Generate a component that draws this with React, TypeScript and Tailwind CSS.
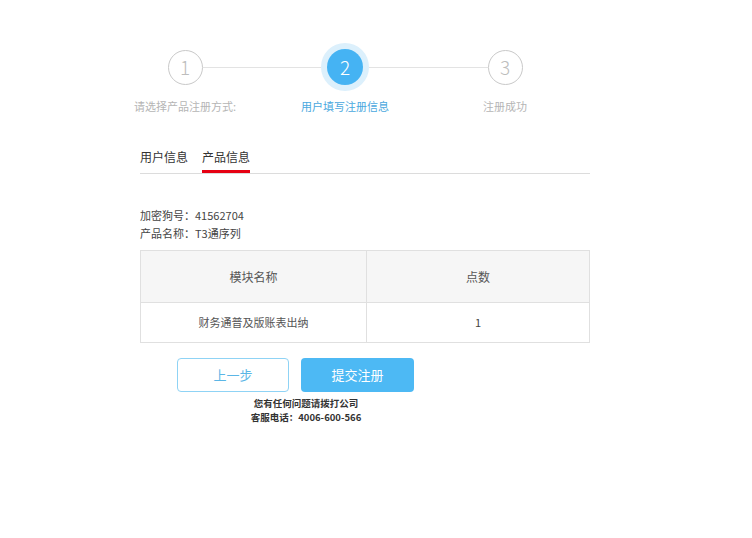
const font = { fontFamily: '"Microsoft YaHei", "Noto Sans CJK SC", "Open Sans", sans-serif' }

const steps = [
  { n: 1, label: '请选择产品注册方式:' },
  { n: 2, label: '用户填写注册信息' },
  { n: 3, label: '注册成功' },
]

function Step({ n, label, active, first, last }: { n: number; label: string; active: boolean; first: boolean; last: boolean }) {
  return (
    <div className="w-[160px] flex flex-col items-center">
      <div className="w-full h-[48px] flex items-center">
        <div className={first ? 'flex-1 h-px' : 'flex-1 h-px bg-[#e3e3e3]'} />
        {active ? (
          <div className="w-[48px] h-[48px] rounded-full bg-[#dcf0fc] flex items-center justify-center">
            <div className="w-[36px] h-[36px] rounded-full bg-[#45b3f3] text-white text-[19px] font-light flex items-center justify-center">
              {n}
            </div>
          </div>
        ) : (
          <div className="w-[35px] h-[35px] rounded-full border-[1.5px] border-[#c9c9c9] text-[#bdbdbd] text-[19px] font-light flex items-center justify-center">
            {n}
          </div>
        )}
        <div className={last ? 'flex-1 h-px' : 'flex-1 h-px bg-[#e3e3e3]'} />
      </div>
      <div className={`mt-[7px] text-[11px] leading-[16px] ${active ? 'text-[#4aa8de]' : 'text-[#b5b5b5]'}`}>{label}</div>
    </div>
  )
}

export default function App() {
  return (
    <div className="w-[752px] h-[538px] bg-white" style={font}>
      <div className="pt-[43px] pl-[105px] flex">
        {steps.map((s, i) => (
          <Step key={s.n} n={s.n} label={s.label} active={i === 1} first={i === 0} last={i === steps.length - 1} />
        ))}
      </div>

      <div className="ml-[140px] w-[450px]">
        <div className="mt-[35px] flex gap-[14px] border-b border-[#dcdcdc]">
          <div className="text-[12px] leading-[16px] text-[#333] pb-[8px]">用户信息</div>
          <div className="text-[12px] leading-[16px] text-[#333] pb-[5px] border-b-[3px] border-[#e60012]">产品信息</div>
        </div>

        <div className="mt-[32px] text-[11px] leading-[18px] text-[#444]">
          <div>加密狗号：41562704</div>
          <div>产品名称：T3通序列</div>
        </div>

        <table className="mt-[8px] w-full border-collapse text-[#555]">
          <thead>
            <tr className="bg-[#f6f6f6]">
              <th className="w-[226px] h-[52px] border border-[#e0e0e0] text-[12px] font-normal">模块名称</th>
              <th className="h-[52px] border border-[#e0e0e0] text-[12px] font-normal">点数</th>
            </tr>
          </thead>
          <tbody>
            <tr>
              <td className="h-[40px] border border-[#e0e0e0] text-[11px] text-center">财务通普及版账表出纳</td>
              <td className="h-[40px] border border-[#e0e0e0] text-[11px] text-center text-[#444]">1</td>
            </tr>
          </tbody>
        </table>

        <div className="mt-[15px] ml-[37px] flex gap-[12px]">
          <button className="w-[112px] h-[34px] rounded-[4px] border border-[#8fd3f5] text-[#5bb6e6] text-[13px]">上一步</button>
          <button className="w-[113px] h-[34px] rounded-[4px] bg-[#4db9f4] text-white text-[13px]">提交注册</button>
        </div>

        <div className="mt-[4px] w-[332px] text-center text-[9.5px] leading-[14px] font-bold text-[#333]">
          <div>您有任何问题请拨打公司</div>
          <div>客服电话：4006-600-566</div>
        </div>
      </div>
    </div>
  )
}
